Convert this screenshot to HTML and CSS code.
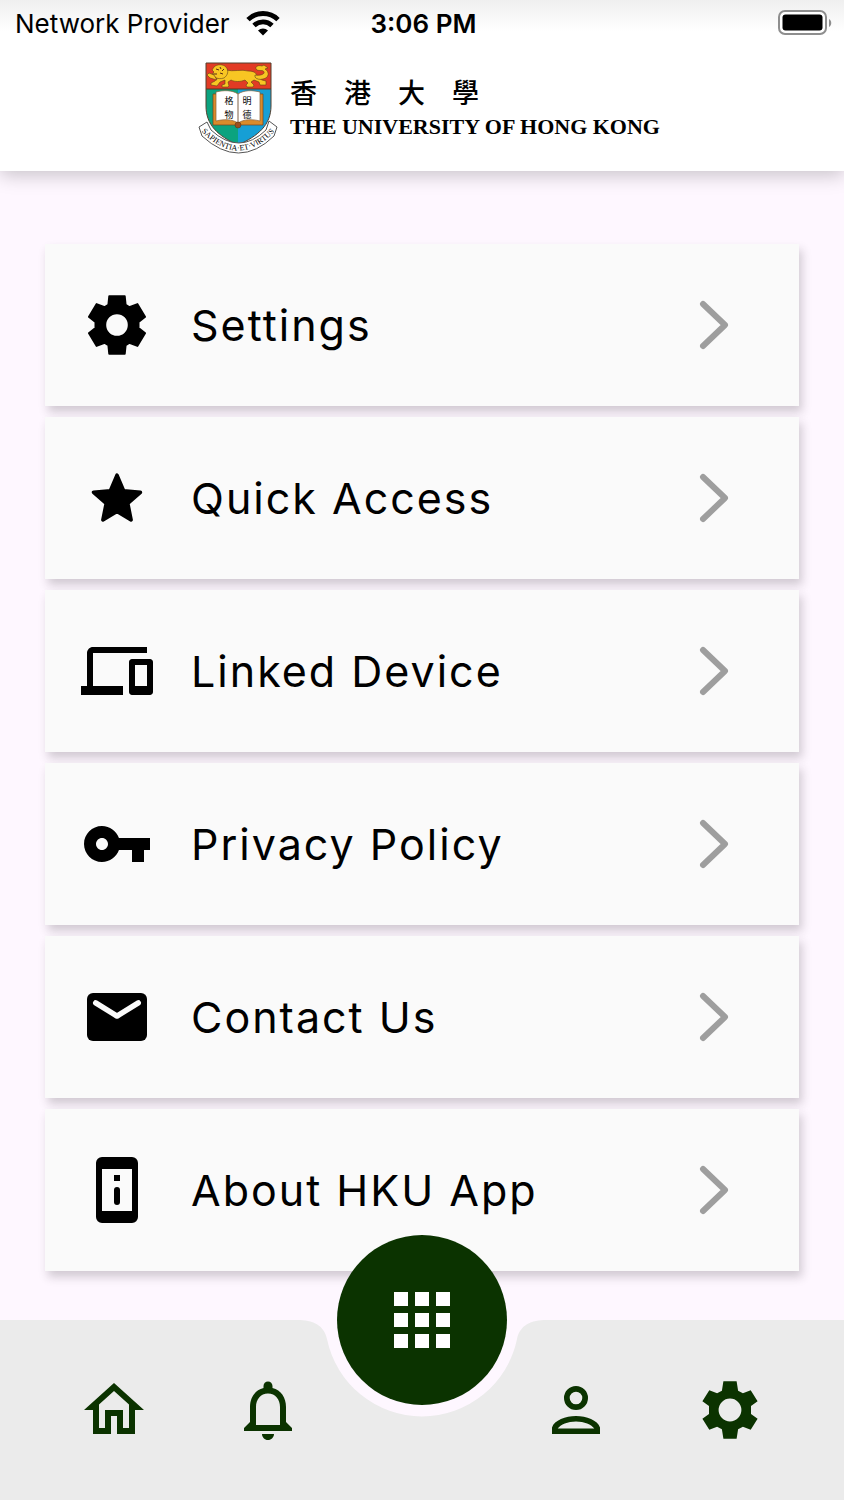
FILE: index.html
```html
<!DOCTYPE html>
<html lang="en">
<head>
    <meta charset="UTF-8">
    <meta name="viewport" content="width=device-width, initial-scale=1.0">
    <title>HKU App</title>
    <link rel="stylesheet" href="styles.css">
</head>
<body>
    <header class="header">
        <div class="status-bar">
            <div class="status-left">
                <span>Network Provider</span>
                <svg class="wifi" viewBox="0 0 34 25" aria-hidden="true">
                    <path d="M17 24.5l-5-5a7.4 7.4 0 0 1 10 0z"/>
                    <path d="M8 14.5a13 13 0 0 1 18 0" fill="none" stroke="#000" stroke-width="4.8"/>
                    <path d="M2 8.600a21.500 21.500 0 0 1 30 0" fill="none" stroke="#000" stroke-width="4.800"/>
                </svg>
            </div>
            <time class="clock">3:06 PM</time>
            <svg class="battery" viewBox="0 0 54 26" role="img" aria-label="Battery full">
                <rect x="1" y="1" width="47" height="23" rx="6" fill="#fff" stroke="#8e8e8e" stroke-width="2"/>
                <rect x="4.500" y="4.500" width="40" height="16" rx="3"/>
                <path d="M51 9v8c3-1.500 3-6.500 0-8z" fill="#8e8e8e"/>
            </svg>
        </div>

        <a class="brand" href="#">
            <!-- University crest -->
            <svg class="crest" viewBox="0 0 80 92" aria-hidden="true">
                <defs>
                    <clipPath id="shield"><path d="M8 1h65v43c0 19-13 30-33 39C20 74 8 63 8 44z"/></clipPath>
                    <path id="motto" d="M0 66Q41 111 80 66"/>
                </defs>
                <g clip-path="url(#shield)">
                    <path d="M7 1h33v84H7z" fill="#0ba37f"/>
                    <path d="M40 1h33v84H40z" fill="#169fd5"/>
                    <path d="M7 1h66v26H7z" fill="#e23b24"/>
                </g>
                <path d="M8 27h65" stroke="#5a3520" stroke-width="1"/>
                <g fill="#f8c623" stroke="#60401a" stroke-width=".6" stroke-linejoin="round">
                    <path d="M28 8c7 2 16-1 22 1 6 0 9 2 9 6l5 3 4 1v4h-6l-1-3-5-2-3 2 3 3-1 2h-6l-1-2 2-2-3-3c-5 2-10 2-14 0l-3 2 1 4-1 1h-6v-2l3-1v-4l-5 2-3 4-6-1v-2l4-2 3-4 5-1z"/>
                    <path d="M16 5c3-3 9-3 12 0 3 4 2 8-2 11-3 1-7 1-9-1l-3-3 2-2-2-2z"/>
                    <path d="M16 13l-5-2-2 2 3 3 7 2z"/>
                    <path d="M57 13c5 1 10-1 9-3-1-3-6 0-8-3-1-3 3-4 6-3l2-1 4 3-3 1c5 3 4 9-2 10-3 1-7 0-8-2z"/>
                </g>
                <path d="M18 7l3 1m1-3l1 2m3 0l-2 2m1 3l-3-1m-3 1l-4 0" stroke="#5b2d12" stroke-width="1" fill="none"/>
                <path d="M8 1h65v43c0 19-13 30-33 39C20 74 8 63 8 44z" fill="none" stroke="#53402f" stroke-width="1"/>
                <!-- Open book -->
                <path d="M17 32h-2v31h22l3 2 3-2h22V32h-2z" fill="#d98b2b" stroke="#70441c" stroke-width=".7"/>
                <path d="M18 30c8-2 16-2 22 2 6-4 14-4 22-2v29c-8-2-16-2-22 2-6-4-14-4-22-2z" fill="#fff" stroke="#8b6137" stroke-width=".7"/>
                <path d="M40 32v29" stroke="#7d6147" stroke-width="1"/>
                <circle cx="40" cy="63" r="3" fill="#9b4e20" stroke="#54310f" stroke-width=".5"/>
                <g class="book-text" text-anchor="middle">
                    <text x="31" y="42">格</text>
                    <text x="31" y="56">物</text>
                    <text x="49" y="42">明</text>
                    <text x="49" y="56">德</text>
                </g>
                <!-- Ribbon -->
                <path d="M9 60L1 65l3 9q37 34 72 0l3-9-8-6-3 9Q41 94 13 68z" fill="#fff" stroke="#555" stroke-width="1" stroke-linejoin="round"/>
                <text class="motto" text-anchor="middle"><textPath href="#motto" startOffset="50%">SAPIENTIA·ET·VIRTUS</textPath></text>
            </svg>
            <div class="brand-name">
                <span class="brand-zh" lang="zh-Hant">香　港　大　學</span>
                <span class="brand-en">THE UNIVERSITY OF HONG KONG</span>
            </div>
        </a>
    </header>

    <main class="menu">
        <a class="menu-item" href="#">
            <svg class="icon" viewBox="0 0 24 24"><path fill-rule="evenodd" stroke="#000" stroke-width=".6" stroke-linejoin="round" d="M9.400 2.400h5.200l.3 2.900 1.200.7 2.700-1 2.600 4.300-2.200 1.700v2l2.200 1.700-2.600 4.300-2.700-1-1.200.7-.3 2.900H9.400l-.3-2.900-1.200-.7-2.700 1-2.600-4.300 2.200-1.700v-2L2.600 9.300 5.200 5l2.700 1 1.200-.7zM12 8.100a3.900 3.900 0 1 0 0 7.800 3.900 3.900 0 0 0 0-7.800z"/></svg>
            <span class="label">Settings</span>
            <svg class="chevron" viewBox="0 0 30 50"><path d="M4 4l22 21L4 46"/></svg>
        </a>
        <a class="menu-item" href="#">
            <svg class="icon" viewBox="0 0 24 24"><path stroke="#000" stroke-width="1.200" stroke-linejoin="round" d="M12 4.400l2.200 5.200 5.600.5-4.200 3.700 1.100 5.500-4.700-2.800-4.700 2.800 1.100-5.500-4.200-3.700 5.600-.5z"/></svg>
            <span class="label">Quick Access</span>
            <svg class="chevron" viewBox="0 0 30 50"><path d="M4 4l22 21L4 46"/></svg>
        </a>
        <a class="menu-item" href="#">
            <svg class="icon" viewBox="0 0 24 24"><path d="M4 6h18V4H4c-1.100 0-2 .9-2 2v11H0v3h14v-3H4V6zm19 2h-6c-.55 0-1 .45-1 1v10c0 .55.45 1 1 1h6c.55 0 1-.45 1-1V9c0-.55-.45-1-1-1zm-1 9h-4v-7h4v7z"/></svg>
            <span class="label">Linked Device</span>
            <svg class="chevron" viewBox="0 0 30 50"><path d="M4 4l22 21L4 46"/></svg>
        </a>
        <a class="menu-item" href="#">
            <svg class="icon" viewBox="0 0 24 24"><path d="M12.650 10C11.830 7.670 9.610 6 7 6c-3.310 0-6 2.690-6 6s2.690 6 6 6c2.610 0 4.830-1.670 5.650-4H17v4h4v-4h2v-4H12.650zM7 14c-1.100 0-2-.9-2-2s.9-2 2-2 2 .9 2 2-.9 2-2 2z"/></svg>
            <span class="label">Privacy Policy</span>
            <svg class="chevron" viewBox="0 0 30 50"><path d="M4 4l22 21L4 46"/></svg>
        </a>
        <a class="menu-item" href="#">
            <svg class="icon" viewBox="0 0 24 24"><rect x="2" y="4" width="20" height="16" rx="2"/><path d="M4.900 7.300L12 11.700l7.100-4.400" fill="none" stroke="#fafafa" stroke-width="1.800" stroke-linecap="round" stroke-linejoin="round"/></svg>
            <span class="label">Contact Us</span>
            <svg class="chevron" viewBox="0 0 30 50"><path d="M4 4l22 21L4 46"/></svg>
        </a>
        <a class="menu-item" href="#">
            <svg class="icon" viewBox="0 0 24 24"><path fill-rule="evenodd" d="M7 1h10a2 2 0 0 1 2 2v18a2 2 0 0 1-2 2H7a2 2 0 0 1-2-2V3a2 2 0 0 1 2-2zm0 4v14h10V5z"/><path d="M11 7h2v2h-2z"/><rect x="11" y="11" width="2" height="6" rx="1"/></svg>
            <span class="label">About HKU App</span>
            <svg class="chevron" viewBox="0 0 30 50"><path d="M4 4l22 21L4 46"/></svg>
        </a>
    </main>

    <nav class="bottom-nav">
        <svg class="nav-shape" viewBox="0 0 844 180" preserveAspectRatio="xMidYMin slice" aria-hidden="true">
            <path d="M-800 0H297C313 0 324 5 327 19A97 97 0 0 0 517 19C520 5 531 0 547 0H1644V180H-800z" fill="#ebebeb"/>
        </svg>
        <a href="#" aria-label="Home"><svg class="icon" viewBox="0 0 24 24"><path d="M12 5.690l5 4.500V18h-2v-6H9v6H7v-7.810l5-4.500M12 3L2 12h3v8h6v-6h2v6h6v-8h3L12 3z"/></svg></a>
        <a href="#" aria-label="Notifications"><svg class="icon" viewBox="0 0 24 24"><path d="M12 22c1.100 0 2-.9 2-2h-4c0 1.100.9 2 2 2zm6-6v-5c0-3.070-1.630-5.640-4.500-6.320V4c0-.83-.67-1.500-1.500-1.500s-1.500.67-1.500 1.500v.68C7.640 5.360 6 7.920 6 11v5l-2 2v1h16v-1l-2-2zm-2 1H8v-6c0-2.480 1.510-4.500 4-4.500s4 2.020 4 4.500v6z"/></svg></a>
        <button class="apps-button" type="button" aria-label="All apps">
            <svg viewBox="0 0 24 24"><path d="M4 8h4V4H4v4zm6 12h4v-4h-4v4zm-6 0h4v-4H4v4zm0-6h4v-4H4v4zm6 0h4v-4h-4v4zm6-10v4h4V4h-4zm-6 4h4V4h-4v4zm6 6h4v-4h-4v4zm0 6h4v-4h-4v4z"/></svg>
        </button>
        <a class="nav-profile" href="#" aria-label="Profile"><svg class="icon" viewBox="0 0 24 24"><path fill-rule="evenodd" d="M12 4a4 4 0 1 1 0 8 4 4 0 0 1 0-8zm0 1.900a2.100 2.100 0 1 0 0 4.200 2.100 2.100 0 0 0 0-4.200zM4 20v-2.200C4.800 15.400 8.500 14 12 14s7.200 1.400 8 3.800V20zm1.900-1.800h12.200c-.9-1.400-3.400-2.400-6.100-2.400s-5.200 1-6.100 2.400z"/></svg></a>
        <a href="#" aria-label="Settings"><svg class="icon" viewBox="0 0 24 24"><path fill-rule="evenodd" d="M9.800 2.400h4.400l.5 3.200 1.600.8 2.600-1 2.300 3.700-2.200 1.600v2.600l2.200 1.600-2.300 3.700-2.600-1-1.600.8-.5 3.200H9.800l-.5-3.200-1.600-.8-2.600 1-2.300-3.700L5 13.300v-2.600L2.800 9.100l2.300-3.700 2.600 1 1.600-.8zM12 8.200a3.800 3.800 0 1 0 0 7.600 3.800 3.800 0 0 0 0-7.600z"/></svg></a>
    </nav>
</body>
</html>
```
FILE: styles.css
```css
* {
    box-sizing: border-box;
}
body {
    font-family: Inter, "Noto Sans CJK TC", sans-serif;
    background-color: #fef7ff;
    color: #000000;
    margin: 0;
    min-height: 100vh;
    display: flex;
    flex-direction: column;
}
a {
    color: inherit;
    text-decoration: none;
}

/* Header */
.header {
    background: linear-gradient(#efefef, #ffffff 32px);
    box-shadow: 0 4px 18px rgba(0, 0, 0, 0.22);
    padding-bottom: 17px;
}
.status-bar {
    display: grid;
    grid-template-columns: 1fr auto 1fr;
    align-items: center;
    height: 46px;
    padding: 0 12px 0 15px;
    font-size: 26px;
}
.status-left {
    display: flex;
    align-items: center;
    gap: 16px;
    white-space: nowrap;
}
.wifi {
    width: 34px;
    height: 25px;
}
.clock {
    font-weight: 600;
}
.battery {
    width: 54px;
    height: 26px;
    justify-self: end;
}
.brand {
    display: flex;
    justify-content: center;
    align-items: center;
    gap: 12px;
    padding: 16px 0 0 14px;
}
.crest {
    width: 80px;
    height: 92px;
}
.book-text {
    font-family: "Noto Sans CJK TC", sans-serif;
    font-size: 9px;
}
.motto {
    font-family: "Liberation Serif", serif;
    font-size: 8px;
}
.brand-name {
    display: flex;
    flex-direction: column;
    gap: 6px;
}
.brand-zh {
    font-family: "Noto Sans CJK TC", sans-serif;
    font-size: 27px;
    font-weight: 500;
    line-height: 32px;
}
.brand-en {
    font-family: "Liberation Serif", serif;
    font-size: 22px;
    font-weight: bold;
    line-height: 26px;
}

/* Menu cards */
.menu {
    flex: 1;
    display: flex;
    flex-direction: column;
    gap: 11px;
    padding: 73px 45px 48px;
}
.menu-item {
    display: flex;
    align-items: center;
    min-height: 162px;
    padding: 0 70px 0 36px;
    background-color: #fafafa;
    box-shadow: 3px 6px 9px rgba(50, 40, 50, 0.22);
}
.icon {
    width: 72px;
    height: 72px;
    flex-shrink: 0;
}
.label {
    flex: 1;
    margin-left: 38px;
    font-size: 43px;
    letter-spacing: 2px;
}
.chevron {
    width: 30px;
    height: 50px;
    fill: none;
    stroke: #9e9e9e;
    stroke-width: 6;
    stroke-linecap: round;
    stroke-linejoin: round;
}

/* Bottom navigation */
.bottom-nav {
    position: relative;
    display: grid;
    grid-template-columns: repeat(5, 1fr);
    align-items: center;
    justify-items: center;
    height: 180px;
    padding: 0 37px;
    fill: #0b3300;
}
.bottom-nav a {
    position: relative;
    display: flex;
}
.nav-shape {
    position: absolute;
    top: 0;
    left: 0;
    width: 100%;
    height: 100%;
}
.apps-button {
    position: absolute;
    top: -85px;
    left: 50%;
    transform: translateX(-50%);
    display: flex;
    align-items: center;
    justify-content: center;
    width: 170px;
    height: 170px;
    padding: 0;
    border: none;
    border-radius: 50%;
    background-color: #0b3300;
    cursor: pointer;
}
.apps-button svg {
    width: 84px;
    height: 84px;
    fill: #ffffff;
}
.nav-profile {
    grid-column: 4;
}
```
